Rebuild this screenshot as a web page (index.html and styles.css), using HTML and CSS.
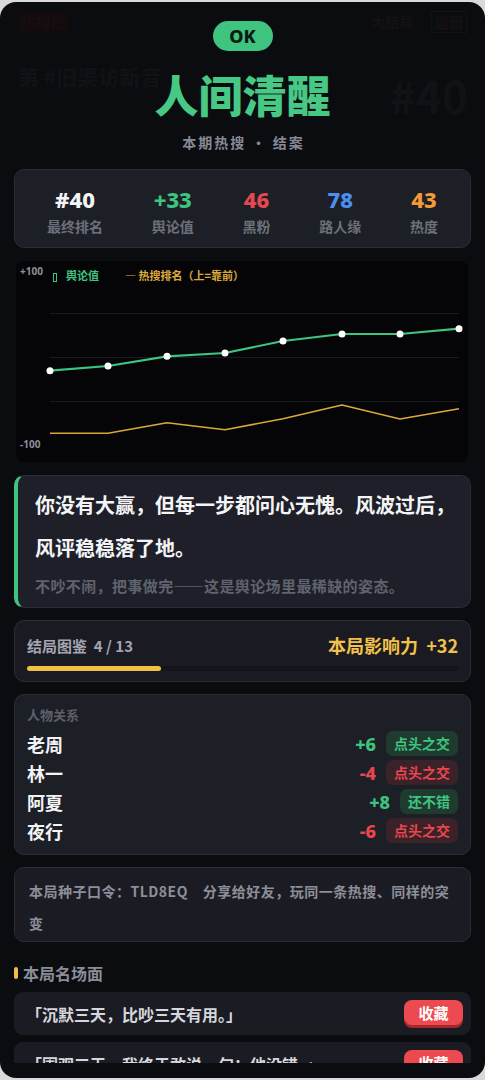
FILE: index.html
```html
<!DOCTYPE html>
<html lang="zh-CN">
<head>
<meta charset="utf-8">
<title>结案</title>
<link rel="stylesheet" href="styles.css">
</head>
<body>
<div class="frame">
  <div class="under">
    <div class="under-head">
      <span class="under-tag">热搜榜</span>
      <div class="under-actions">
        <span class="under-link">大结局</span>
        <span class="under-btn">返回</span>
      </div>
    </div>
    <div class="under-row">
      <span class="under-title">第 #旧渠访新音</span>
      <span class="under-rank">#40</span>
    </div>
  </div>

  <div class="modal">
    <div class="scroll">
      <div class="hero">
        <div class="ok-pill">OK</div>
        <h1 class="hero-title">人间清醒</h1>
        <div class="hero-sub">本期热搜 · 结案</div>
      </div>

      <div class="card stats">
        <div class="stat"><div class="stat-val c-white">#40</div><div class="stat-label">最终排名</div></div>
        <div class="stat"><div class="stat-val c-green">+33</div><div class="stat-label">舆论值</div></div>
        <div class="stat"><div class="stat-val c-red">46</div><div class="stat-label">黑粉</div></div>
        <div class="stat"><div class="stat-val c-blue">78</div><div class="stat-label">路人缘</div></div>
        <div class="stat"><div class="stat-val c-orange">43</div><div class="stat-label">热度</div></div>
      </div>

      <div class="chart">
        <svg class="chart-svg" width="452" height="201" viewBox="0 0 452 201">
          <text class="axis" x="4" y="14">+100</text>
          <text class="axis" x="4" y="187">-100</text>
          <rect x="37.5" y="12.5" width="3" height="8" fill="none" stroke="#3ec47f" stroke-width="1"/>
          <text class="legend-g" x="50" y="19">舆论值</text>
          <text class="legend-y" x="109" y="19">— 热搜排名（上=靠前）</text>
          <g stroke="#1a1b21" stroke-width="1">
            <line x1="34" y1="52.5" x2="443" y2="52.5"/>
            <line x1="34" y1="96.5" x2="443" y2="96.5"/>
            <line x1="34" y1="140.5" x2="443" y2="140.5"/>
          </g>
          <polyline fill="none" stroke="#d9a838" stroke-width="1.6" stroke-linejoin="round"
            points="34,172.3 92,172.3 151,161.7 209,168.7 267,157.7 326,144 384,158 443,147.7"/>
          <polyline fill="none" stroke="#3ec47f" stroke-width="2.2" stroke-linejoin="round"
            points="34,109.7 92,105 151,95.3 209,92 267,80 326,73 384,73 443,67.7"/>
          <g fill="#ffffff">
            <circle cx="34" cy="109.7" r="3.5"/>
            <circle cx="92" cy="105" r="3.5"/>
            <circle cx="151" cy="95.3" r="3.5"/>
            <circle cx="209" cy="92" r="3.5"/>
            <circle cx="267" cy="80" r="3.5"/>
            <circle cx="326" cy="73" r="3.5"/>
            <circle cx="384" cy="73" r="3.5"/>
            <circle cx="443" cy="67.7" r="3.5"/>
          </g>
        </svg>
      </div>

      <div class="card quote">
        <p class="quote-main">你没有大赢，但每一步都问心无愧。风波过后，风评稳稳落了地。</p>
        <p class="quote-sub">不吵不闹，把事做完——这是舆论场里最稀缺的姿态。</p>
      </div>

      <div class="card progress">
        <div class="progress-row">
          <span class="progress-label">结局图鉴&nbsp; 4 / 13</span>
          <span class="progress-impact">本局影响力&nbsp; +32</span>
        </div>
        <div class="bar"><div class="bar-fill" style="width:31%"></div></div>
      </div>

      <div class="card rel">
        <div class="rel-title">人物关系</div>
        <div class="rel-row">
          <span class="rel-name">老周</span>
          <span class="rel-val c-green">+6</span>
          <span class="badge badge-g">点头之交</span>
        </div>
        <div class="rel-row">
          <span class="rel-name">林一</span>
          <span class="rel-val c-red">-4</span>
          <span class="badge badge-r">点头之交</span>
        </div>
        <div class="rel-row">
          <span class="rel-name">阿夏</span>
          <span class="rel-val c-green">+8</span>
          <span class="badge badge-g">还不错</span>
        </div>
        <div class="rel-row">
          <span class="rel-name">夜行</span>
          <span class="rel-val c-red">-6</span>
          <span class="badge badge-r">点头之交</span>
        </div>
      </div>

      <div class="card seed"><p class="seed-text">本局种子口令：TLD8EQ&nbsp;&nbsp;&nbsp; 分享给好友，玩同一条热搜、同样的突变</p></div>

      <div class="section-head">本局名场面</div>

      <div class="scene">
        <span class="scene-text">「沉默三天，比吵三天有用。」</span>
        <button class="fav">收藏</button>
      </div>
      <div class="scene">
        <span class="scene-text">「围观三天，我终于敢说一句：他没错。」</span>
        <button class="fav">收藏</button>
      </div>
    </div>
  </div>
</div>
</body>
</html>
```

FILE: styles.css
```css
* { box-sizing: border-box; }

html, body {
  margin: 0;
  padding: 0;
  background: #d9d9db;
}

body {
  padding-top: 2px;
  font-family: "Noto Sans CJK SC", "Noto Sans", sans-serif;
}

.frame {
  position: relative;
  width: 485px;
  height: 1076px;
  border-radius: 16px;
  background: #0b0c10;
  overflow: hidden;
}

/* dimmed page underneath the result sheet */
.under {
  padding: 9px 20px 0 18px;
}
.under-head {
  display: flex;
  justify-content: space-between;
  align-items: center;
}
.under-tag {
  font-size: 15px;
  font-weight: 700;
  color: #170e12;
  background: #110b0e;
  padding: 0 3px;
  line-height: 20px;
}
.under-actions {
  display: flex;
  gap: 18px;
  margin-right: -2px;
}
.under-link, .under-btn {
  font-size: 14px;
  font-weight: 700;
  color: #161014;
  line-height: 20px;
}
.under-btn {
  border: 1px solid #121317;
  padding: 0 3px;
}
.under-row {
  display: flex;
  justify-content: space-between;
  align-items: flex-start;
  margin-top: 29px;
}
.under-title {
  font-size: 21px;
  font-weight: 700;
  color: #111216;
  line-height: 28px;
}
.under-rank {
  font-size: 44px;
  font-weight: 700;
  color: #111216;
  line-height: 48px;
  margin-top: 9px;
  margin-right: -3px;
}

/* result sheet */
.modal {
  position: absolute;
  inset: 0;
  padding: 0 14px 15px;
}
.scroll {
  height: 100%;
  overflow: hidden;
}

.hero {
  display: flex;
  flex-direction: column;
  align-items: center;
}
.ok-pill {
  margin-top: 19px;
  width: 60px;
  height: 30px;
  border-radius: 15px;
  background: #3ec47f;
  color: #0c1a12;
  font-family: "Noto Sans", sans-serif;
  font-weight: 800;
  font-size: 18px;
  line-height: 30px;
  text-align: center;
}
.hero-title {
  margin: 17px 0 0;
  font-size: 44px;
  line-height: 52px;
  font-weight: 900;
  color: #47c985;
  letter-spacing: 0;
}
.hero-sub {
  margin-top: 12px;
  font-size: 14px;
  line-height: 20px;
  font-weight: 700;
  color: #858995;
  letter-spacing: 2px;
  padding-left: 2px;
}

.card {
  border: 1px solid #2a2c36;
  background: #1d1f27;
  border-radius: 10px;
}

.stats {
  margin-top: 17px;
  display: flex;
  justify-content: space-between;
  padding: 15px 32px 10px;
}
.stat {
  display: flex;
  flex-direction: column;
  align-items: center;
}
.stat-val {
  font-family: "Noto Sans", sans-serif;
  font-size: 22px;
  line-height: 28px;
  font-weight: 800;
}
.stat-label {
  margin-top: 2px;
  font-size: 14px;
  line-height: 22px;
  font-weight: 700;
  color: #6c707b;
}
.c-white { color: #f3f4f6; }
.c-green { color: #3ec47f; }
.c-red { color: #e8474f; }
.c-blue { color: #4d8ef2; }
.c-orange { color: #f39a33; }

.chart {
  margin: 13px 3px 0 2px;
  height: 201px;
  border-radius: 8px;
  background: #050508;
  overflow: hidden;
}
.chart-svg { display: block; }
.axis {
  font-family: "Noto Sans", sans-serif;
  font-size: 10px;
  font-weight: 700;
  fill: #8d909a;
}
.legend-g {
  font-size: 11px;
  font-weight: 700;
  fill: #3ec47f;
}
.legend-y {
  font-size: 11px;
  font-weight: 700;
  fill: #dcaa3c;
}

.quote {
  margin-top: 13px;
  border-left: 4px solid #3ec47f;
  padding: 7px 10px 10px 17px;
  background: #1e1f28;
}
.quote-main {
  margin: 0;
  font-size: 20px;
  line-height: 43px;
  font-weight: 700;
  color: #f3f4f6;
}
.quote-sub {
  margin: 6px 0 0;
  font-size: 15px;
  line-height: 22px;
  font-weight: 700;
  color: #5f636d;
  letter-spacing: 0.4px;
}

.progress {
  margin-top: 12px;
  padding: 12px 12px 10px;
  background: #1a1b22;
}
.progress-row {
  display: flex;
  justify-content: space-between;
  align-items: center;
  height: 24px;
}
.progress-label {
  font-size: 15px;
  font-weight: 700;
  color: #a2a5af;
}
.progress-impact {
  font-size: 18px;
  font-weight: 700;
  color: #f2c14a;
}
.bar {
  margin-top: 9px;
  height: 5px;
  border-radius: 3px;
  background: #14151b;
}
.bar-fill {
  height: 100%;
  border-radius: 3px;
  background: #efc043;
}

.rel {
  margin-top: 12px;
  padding: 10px 12px 11px;
}
.rel-title {
  font-size: 13px;
  line-height: 20px;
  font-weight: 700;
  color: #5c606b;
}
.rel-row {
  display: flex;
  align-items: center;
  height: 25px;
  margin-top: 4px;
}
.rel-title + .rel-row { margin-top: 6px; }
.rel-name {
  flex: 1;
  font-size: 18px;
  font-weight: 700;
  color: #f3f4f6;
}
.rel-val {
  font-family: "Noto Sans", sans-serif;
  font-size: 18px;
  font-weight: 800;
  margin-right: 10px;
}
.badge {
  height: 25px;
  line-height: 25px;
  padding: 0 8px;
  border-radius: 7px;
  font-size: 14px;
  font-weight: 700;
}
.badge-g { background: #1f3a2f; color: #3ec47f; }
.badge-r { background: #3b2128; color: #e8474f; }

.seed {
  margin-top: 12px;
  padding: 7px 14px 2px;
  background: #1b1c23;
}
.seed-text {
  margin: 0;
  font-size: 14px;
  letter-spacing: 0.5px;
  line-height: 32px;
  font-weight: 700;
  color: #8c8f99;
}

.section-head {
  margin-top: 20px;
  display: flex;
  align-items: center;
  font-size: 16px;
  line-height: 22px;
  font-weight: 700;
  color: #8a8d97;
}
.section-head::before {
  content: "";
  width: 4px;
  height: 12px;
  border-radius: 2px;
  background: #efc043;
  margin-right: 5px;
}

.scene {
  margin-top: 8px;
  display: flex;
  align-items: center;
  justify-content: space-between;
  height: 43px;
  padding: 0 8px 0 12px;
  background: #1b1c23;
  border-radius: 9px;
}
.scene + .scene { margin-top: 7px; }
.scene-text {
  font-size: 16px;
  font-weight: 700;
  color: #d5d7dd;
}
.fav {
  width: 59px;
  height: 25px;
  margin-top: -3px;
  border: 0;
  border-radius: 8px;
  background: #ec4a50;
  box-shadow: 0 3px 0 #a6282e;
  color: #ffffff;
  font-family: "Noto Sans CJK SC", sans-serif;
  font-size: 15px;
  font-weight: 700;
  line-height: 25px;
  padding: 0;
}
```
